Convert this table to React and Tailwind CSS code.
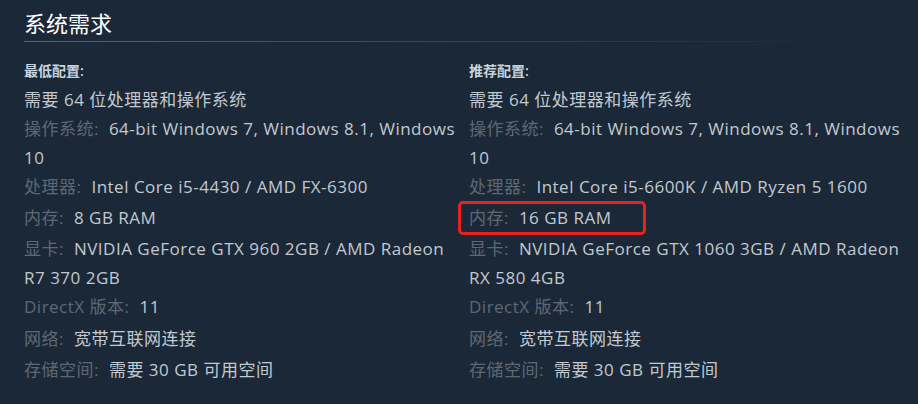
import React from "react";

const font = { fontFamily: '"Open Sans", "Noto Sans", "Noto Sans CJK SC", sans-serif' };

function Row({ label, value, highlight, mb }) {
  return (
    <li className={`relative whitespace-nowrap ${mb}`}>
      <span className="text-[#5e6873]">{label}:</span>{" "}
      <span className="ml-[5px] text-[#c2c9cf]">
        {Array.isArray(value)
          ? value.map((v, i) => (
              <React.Fragment key={i}>
                {i > 0 && <br />}
                {v}
              </React.Fragment>
            ))
          : value}
      </span>
      {highlight && (
        <div className="absolute left-[-11px] top-[-2px] h-[34px] w-[188px] rounded-[5px] border-[3px] border-[#e8231f]" />
      )}
    </li>
  );
}

function Col({ title, rows }) {
  return (
    <div>
      <div className="text-[14px] leading-[18px] text-[#c6d4df] font-semibold">{title}:</div>
      <ul className="mt-[5px] text-[17px] leading-[29px] tracking-[0.5px]">
        <li className="text-[#c2c9cf]">需要 64 位处理器和操作系统</li>
        {rows.map((r, i) => (
          <Row key={i} {...r} />
        ))}
      </ul>
    </div>
  );
}

export default function App() {
  const min = [
    { label: "操作系统", value: ["64-bit Windows 7, Windows 8.1, Windows", "10"], mb: "mb-0" },
    { label: "处理器", value: "Intel Core i5-4430 / AMD FX-6300", mb: "mb-[2px]" },
    { label: "内存", value: "8 GB RAM", mb: "mb-[2px]" },
    { label: "显卡", value: ["NVIDIA GeForce GTX 960 2GB / AMD Radeon", "R7 370 2GB"], mb: "mb-0" },
    { label: "DirectX 版本", value: "11", mb: "mb-[3px]" },
    { label: "网络", value: "宽带互联网连接", mb: "mb-[2px]" },
    { label: "存储空间", value: "需要 30 GB 可用空间", mb: "mb-0" },
  ];
  const rec = [
    { label: "操作系统", value: ["64-bit Windows 7, Windows 8.1, Windows", "10"], mb: "mb-0" },
    { label: "处理器", value: "Intel Core i5-6600K / AMD Ryzen 5 1600", mb: "mb-[2px]" },
    { label: "内存", value: "16 GB RAM", highlight: true, mb: "mb-[2px]" },
    { label: "显卡", value: ["NVIDIA GeForce GTX 1060 3GB / AMD Radeon", "RX 580 4GB"], mb: "mb-0" },
    { label: "DirectX 版本", value: "11", mb: "mb-[3px]" },
    { label: "网络", value: "宽带互联网连接", mb: "mb-[2px]" },
    { label: "存储空间", value: "需要 30 GB 可用空间", mb: "mb-0" },
  ];
  return (
    <div className="w-[918px] h-[404px] bg-[#1b2838] overflow-hidden px-6 pt-[9px]" style={font}>
      <h2 className="text-[22px] leading-[28px] text-white pb-[4px]">系统需求</h2>
      <div className="h-px w-[826px] bg-gradient-to-r from-[#3d6c8a] via-[#2c4a60] to-transparent" />
      <div className="mt-[20px] grid grid-cols-[445px_425px]">
        <Col title="最低配置" rows={min} />
        <Col title="推荐配置" rows={rec} />
      </div>
    </div>
  );
}
